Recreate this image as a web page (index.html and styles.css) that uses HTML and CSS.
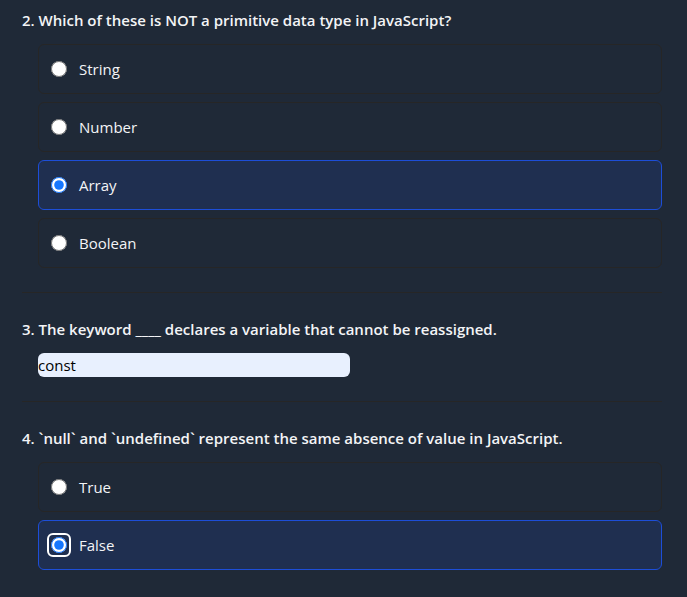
FILE: index.html
```html
<!DOCTYPE html>
<html lang="en">
<head>
<meta charset="utf-8">
<title>JavaScript Quiz</title>
<link rel="stylesheet" href="styles.css">
</head>
<body>
<form class="quiz">
  <fieldset class="question">
    <legend class="prompt">2. Which of these is NOT a primitive data type in JavaScript?</legend>
    <div class="options">
      <label class="option"><input class="radio" type="radio" name="q2">String</label>
      <label class="option"><input class="radio" type="radio" name="q2">Number</label>
      <label class="option selected"><input class="radio" type="radio" name="q2" checked>Array</label>
      <label class="option"><input class="radio" type="radio" name="q2">Boolean</label>
    </div>
  </fieldset>
  <div class="question">
    <label class="prompt" for="q3">3. The keyword ____ declares a variable that cannot be reassigned.</label>
    <div class="options"><input class="answer" id="q3" type="text" value="const"></div>
  </div>
  <fieldset class="question">
    <legend class="prompt">4. `null` and `undefined` represent the same absence of value in JavaScript.</legend>
    <div class="options">
      <label class="option"><input class="radio" type="radio" name="q4">True</label>
      <label class="option selected"><span class="focus-ring"><input class="radio" type="radio" name="q4" checked></span>False</label>
    </div>
  </fieldset>
</form>
</body>
</html>
```
FILE: styles.css
```css
* {
  box-sizing: border-box;
}

body {
  margin: 0;
  background: #1f2937;
  color: #f3f4f6;
  font: 15px/24px "Segoe UI", "Open Sans", "Noto Sans", sans-serif;
}

.quiz {
  padding: 8px 25px 0 22px;
}

.question {
  min-width: 0;
  margin: 0 0 24px;
  padding: 0 0 24px;
  border: 0;
  border-bottom: 1px solid #262626;
}

.question:last-child {
  margin-bottom: 0;
  border-bottom: 0;
}

.prompt {
  display: block;
  margin-bottom: 12px;
  padding: 0;
  font-weight: 600;
}

.options {
  display: flex;
  flex-direction: column;
  gap: 8px;
  padding-left: 16px;
}

.option {
  display: flex;
  align-items: center;
  gap: 12px;
  padding: 12px;
  border: 1px solid #262626;
  border-radius: 6px;
}

.selected {
  border-color: #1d4ed8;
  background: #1f2f50;
}

.radio {
  flex: none;
  width: 16px;
  height: 16px;
  margin: 0;
  accent-color: #1677ff;
}

.focus-ring {
  display: flex;
  outline: 2px solid #fff;
  outline-offset: 2px;
  border-radius: 2px;
}

.answer {
  display: block;
  width: 50%;
  height: 24px;
  padding: 0;
  border: 0;
  border-radius: 6px;
  background: #e8f0fe;
  color: #000;
  font: inherit;
}
```
